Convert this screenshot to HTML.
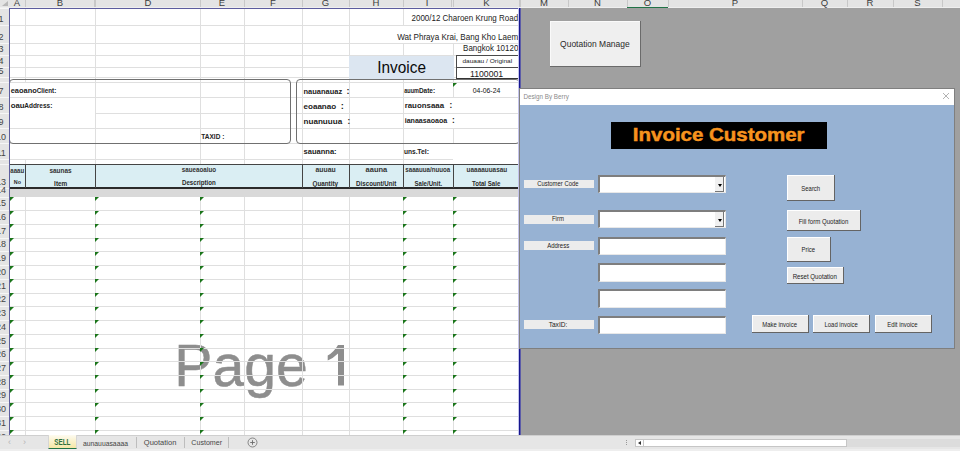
<!DOCTYPE html><html><head><meta charset="utf-8"><style>
html,body{margin:0;padding:0;}
body{width:960px;height:451px;overflow:hidden;position:relative;background:#fff;font-family:"Liberation Sans",sans-serif;}
div{position:absolute;box-sizing:border-box;}
svg{position:absolute;left:0;top:0;}
.t{white-space:nowrap;line-height:1;}
text{font-family:"Liberation Sans",sans-serif;}
</style></head><body>
<div style="left:9px;top:8px;width:511px;height:427px;background:#fff"></div>
<svg width="960" height="451"><text x="174.3" y="385.6" font-size="59" fill="#8e8e8e" stroke="#8e8e8e" stroke-width="0.5" textLength="133.5" lengthAdjust="spacingAndGlyphs">Page</text><path d="M338 345H344V385.4H338V353.5Q333 358.5 327.7 360.5V355.6Q334 352 338 345Z" fill="#8e8e8e"/></svg>
<div style="left:9px;top:25px;width:511px;height:1px;background:#dfdfdf"></div>
<div style="left:9px;top:43px;width:511px;height:1px;background:#dfdfdf"></div>
<div style="left:9px;top:55px;width:511px;height:1px;background:#dfdfdf"></div>
<div style="left:9px;top:67px;width:511px;height:1px;background:#dfdfdf"></div>
<div style="left:9px;top:77px;width:511px;height:1px;background:#dfdfdf"></div>
<div style="left:9px;top:82px;width:511px;height:1px;background:#dfdfdf"></div>
<div style="left:9px;top:97px;width:511px;height:1px;background:#dfdfdf"></div>
<div style="left:9px;top:113px;width:511px;height:1px;background:#dfdfdf"></div>
<div style="left:9px;top:128px;width:511px;height:1px;background:#dfdfdf"></div>
<div style="left:9px;top:143px;width:511px;height:1px;background:#dfdfdf"></div>
<div style="left:9px;top:159px;width:511px;height:1px;background:#dfdfdf"></div>
<div style="left:9px;top:210px;width:511px;height:1px;background:#dfdfdf"></div>
<div style="left:9px;top:224px;width:511px;height:1px;background:#dfdfdf"></div>
<div style="left:9px;top:238px;width:511px;height:1px;background:#dfdfdf"></div>
<div style="left:9px;top:251px;width:511px;height:1px;background:#dfdfdf"></div>
<div style="left:9px;top:265px;width:511px;height:1px;background:#dfdfdf"></div>
<div style="left:9px;top:279px;width:511px;height:1px;background:#dfdfdf"></div>
<div style="left:9px;top:293px;width:511px;height:1px;background:#dfdfdf"></div>
<div style="left:9px;top:306px;width:511px;height:1px;background:#dfdfdf"></div>
<div style="left:9px;top:320px;width:511px;height:1px;background:#dfdfdf"></div>
<div style="left:9px;top:334px;width:511px;height:1px;background:#dfdfdf"></div>
<div style="left:9px;top:348px;width:511px;height:1px;background:#dfdfdf"></div>
<div style="left:9px;top:361px;width:511px;height:1px;background:#dfdfdf"></div>
<div style="left:9px;top:375px;width:511px;height:1px;background:#dfdfdf"></div>
<div style="left:9px;top:389px;width:511px;height:1px;background:#dfdfdf"></div>
<div style="left:9px;top:402px;width:511px;height:1px;background:#dfdfdf"></div>
<div style="left:9px;top:416px;width:511px;height:1px;background:#dfdfdf"></div>
<div style="left:9px;top:430px;width:511px;height:1px;background:#dfdfdf"></div>
<div style="left:25px;top:8px;width:1px;height:427px;background:#dfdfdf"></div>
<div style="left:95px;top:8px;width:1px;height:427px;background:#dfdfdf"></div>
<div style="left:200px;top:8px;width:1px;height:427px;background:#dfdfdf"></div>
<div style="left:244px;top:8px;width:1px;height:427px;background:#dfdfdf"></div>
<div style="left:302px;top:8px;width:1px;height:427px;background:#dfdfdf"></div>
<div style="left:349px;top:8px;width:1px;height:427px;background:#dfdfdf"></div>
<div style="left:403px;top:8px;width:1px;height:427px;background:#dfdfdf"></div>
<div style="left:453px;top:8px;width:1px;height:427px;background:#dfdfdf"></div>
<div style="left:404px;top:9px;width:115px;height:16px;background:#fff"></div>
<div style="left:350px;top:26px;width:169px;height:17px;background:#fff"></div>
<div style="left:10px;top:144px;width:85px;height:15px;background:#fff"></div>
<div style="left:453px;top:144px;width:66px;height:20px;background:#fff"></div>
<div style="left:10px;top:83px;width:280px;height:60px;background:#fff"></div>
<div style="left:297px;top:83px;width:221px;height:60px;background:#fff"></div>
<div style="left:10px;top:97px;width:280px;height:1px;background:#dfdfdf"></div>
<div style="left:10px;top:128px;width:280px;height:1px;background:#dfdfdf"></div>
<div style="left:95px;top:113px;width:195px;height:1px;background:#dfdfdf"></div>
<div style="left:95px;top:83px;width:1px;height:60px;background:#dfdfdf"></div>
<div style="left:200px;top:83px;width:1px;height:60px;background:#dfdfdf"></div>
<div style="left:244px;top:83px;width:1px;height:60px;background:#dfdfdf"></div>
<div style="left:297px;top:97px;width:221px;height:1px;background:#dfdfdf"></div>
<div style="left:297px;top:113px;width:221px;height:1px;background:#dfdfdf"></div>
<div style="left:297px;top:128px;width:221px;height:1px;background:#dfdfdf"></div>
<div style="left:302px;top:83px;width:1px;height:60px;background:#dfdfdf"></div>
<div style="left:349px;top:83px;width:1px;height:60px;background:#dfdfdf"></div>
<div style="left:403px;top:83px;width:1px;height:60px;background:#dfdfdf"></div>
<div style="left:453px;top:83px;width:1px;height:14px;background:#dfdfdf"></div>
<div style="left:453px;top:128px;width:1px;height:15px;background:#dfdfdf"></div>
<div style="left:9px;top:79px;width:282px;height:64.5px;border:1.4px solid #707070;border-radius:4px;"></div>
<div style="left:296px;top:79px;width:224px;height:64.5px;border:1.4px solid #707070;border-radius:4px;"></div>
<div style="left:349px;top:56px;width:104.5px;height:23px;background:#dce6f1"></div>
<div style="left:455.5px;top:55px;width:63.5px;height:24px;background:#fff;border:1px solid #4a4a4a;border-bottom:1.5px solid #333;"></div>
<div style="left:455.5px;top:67px;width:63.5px;height:1px;background:#4a4a4a"></div>
<div style="left:9px;top:164px;width:511px;height:24px;background:#daeef3"></div>
<div style="left:9px;top:164px;width:511px;height:1px;background:#444"></div>
<div style="left:9px;top:187px;width:511px;height:2px;background:#2a2a2a"></div>
<div style="left:25px;top:164px;width:1px;height:24px;background:#444"></div>
<div style="left:95px;top:164px;width:1px;height:24px;background:#444"></div>
<div style="left:302px;top:164px;width:1px;height:24px;background:#444"></div>
<div style="left:349px;top:164px;width:1px;height:24px;background:#444"></div>
<div style="left:403px;top:164px;width:1px;height:24px;background:#444"></div>
<div style="left:453px;top:164px;width:1px;height:24px;background:#444"></div>
<div style="left:10px;top:189px;width:510px;height:8px;background:#d9d9d9"></div>
<svg width="960" height="451"><text x="411.50" y="21.4" font-size="8.5" font-weight="normal" fill="#222" textLength="106.60" lengthAdjust="spacingAndGlyphs">2000/12 Charoen Krung Road</text><text x="397.20" y="39.8" font-size="8.5" font-weight="normal" fill="#222" textLength="121.10" lengthAdjust="spacingAndGlyphs">Wat Phraya Krai, Bang Kho Laem</text><text x="463.10" y="50.9" font-size="8.5" font-weight="normal" fill="#222" textLength="55.20" lengthAdjust="spacingAndGlyphs">Bangkok 10120</text><text x="377.30" y="73.1" font-size="15.8" font-weight="normal" fill="#0a0a0a" textLength="48.70" lengthAdjust="spacingAndGlyphs">Invoice</text><text x="462.45" y="62.9" font-size="5.8" font-weight="normal" fill="#1a1a1a" textLength="49.75" lengthAdjust="spacingAndGlyphs">dauaau / Original</text><text x="469.95" y="76.6" font-size="8.8" font-weight="normal" fill="#1a1a1a" textLength="33.25" lengthAdjust="spacingAndGlyphs">1100001</text><text x="10.70" y="93.25" font-size="7.4" font-weight="bold" fill="#222" textLength="26.10" lengthAdjust="spacingAndGlyphs">eaoano</text><text x="36.70" y="93.25" font-size="7.0" font-weight="bold" fill="#222" textLength="19.60" lengthAdjust="spacingAndGlyphs">Client:</text><text x="10.70" y="107.8" font-size="7.4" font-weight="bold" fill="#222" textLength="13.90" lengthAdjust="spacingAndGlyphs">oau</text><text x="24.30" y="107.8" font-size="7.0" font-weight="bold" fill="#222" textLength="28.00" lengthAdjust="spacingAndGlyphs">Address:</text><text x="201.35" y="139.4" font-size="7.4" font-weight="bold" fill="#222" textLength="22.95" lengthAdjust="spacingAndGlyphs">TAXID :</text><text x="303.50" y="93.5" font-size="7.4" font-weight="bold" fill="#222" textLength="38.70" lengthAdjust="spacingAndGlyphs">nauanauaz</text><text x="346.60" y="93.5" font-size="8.5" font-weight="bold" fill="#222" textLength="3.00" lengthAdjust="spacingAndGlyphs">:</text><text x="303.50" y="108.9" font-size="7.4" font-weight="bold" fill="#222" textLength="32.70" lengthAdjust="spacingAndGlyphs">eoaanao</text><text x="340.70" y="108.9" font-size="8.5" font-weight="bold" fill="#222" textLength="3.10" lengthAdjust="spacingAndGlyphs">:</text><text x="303.50" y="123.9" font-size="7.4" font-weight="bold" fill="#222" textLength="38.70" lengthAdjust="spacingAndGlyphs">nuanuuua</text><text x="347.60" y="123.9" font-size="8.5" font-weight="bold" fill="#222" textLength="2.70" lengthAdjust="spacingAndGlyphs">:</text><text x="303.50" y="153.7" font-size="7.4" font-weight="bold" fill="#222" textLength="33.10" lengthAdjust="spacingAndGlyphs">sauanna:</text><text x="404.20" y="92.75" font-size="7.4" font-weight="bold" fill="#222" textLength="14.80" lengthAdjust="spacingAndGlyphs">auum</text><text x="418.90" y="92.75" font-size="7.0" font-weight="bold" fill="#222" textLength="16.20" lengthAdjust="spacingAndGlyphs">Date:</text><text x="404.70" y="108" font-size="7.4" font-weight="bold" fill="#222" textLength="39.35" lengthAdjust="spacingAndGlyphs">rauonsaaa</text><text x="449.45" y="108" font-size="8.5" font-weight="bold" fill="#222" textLength="2.75" lengthAdjust="spacingAndGlyphs">:</text><text x="404.70" y="123.25" font-size="7.4" font-weight="bold" fill="#222" textLength="42.50" lengthAdjust="spacingAndGlyphs">ianaasaoaoa</text><text x="451.95" y="123.25" font-size="8.5" font-weight="bold" fill="#222" textLength="2.75" lengthAdjust="spacingAndGlyphs">:</text><text x="404.00" y="153.7" font-size="7.4" font-weight="bold" fill="#222" textLength="13.60" lengthAdjust="spacingAndGlyphs">uns.</text><text x="417.30" y="153.7" font-size="7.0" font-weight="bold" fill="#222" textLength="11.80" lengthAdjust="spacingAndGlyphs">Tel:</text><text x="472.80" y="93.25" font-size="6.6" font-weight="normal" fill="#111" textLength="27.50" lengthAdjust="spacingAndGlyphs">04-06-24</text><text x="10.30" y="172.5" font-size="7.4" font-weight="bold" fill="#333" textLength="13.90" lengthAdjust="spacingAndGlyphs">aaau</text><text x="13.80" y="184.3" font-size="5.6" font-weight="bold" fill="#2a2a2a" textLength="7.15" lengthAdjust="spacingAndGlyphs">No</text><text x="49.40" y="172.5" font-size="7.4" font-weight="bold" fill="#333" textLength="22.20" lengthAdjust="spacingAndGlyphs">saunas</text><text x="54.10" y="185.6" font-size="6.8" font-weight="bold" fill="#2a2a2a" textLength="13.20" lengthAdjust="spacingAndGlyphs">Item</text><text x="181.70" y="172.1" font-size="7.4" font-weight="bold" fill="#333" textLength="34.40" lengthAdjust="spacingAndGlyphs">saueaoaiuo</text><text x="182.00" y="185.4" font-size="6.8" font-weight="bold" fill="#2a2a2a" textLength="33.80" lengthAdjust="spacingAndGlyphs">Description</text><text x="315.50" y="172.3" font-size="7.4" font-weight="bold" fill="#333" textLength="20.10" lengthAdjust="spacingAndGlyphs">auuau</text><text x="312.50" y="185.5" font-size="6.8" font-weight="bold" fill="#2a2a2a" textLength="25.60" lengthAdjust="spacingAndGlyphs">Quantity</text><text x="365.60" y="172.3" font-size="7.4" font-weight="bold" fill="#333" textLength="21.70" lengthAdjust="spacingAndGlyphs">aauna</text><text x="356.10" y="185.5" font-size="6.8" font-weight="bold" fill="#2a2a2a" textLength="40.20" lengthAdjust="spacingAndGlyphs">Discount/Unit</text><text x="405.30" y="172.25" font-size="7.4" font-weight="bold" fill="#333" textLength="45.00" lengthAdjust="spacingAndGlyphs">saaauua/nuuoa</text><text x="414.45" y="185.5" font-size="6.8" font-weight="bold" fill="#2a2a2a" textLength="27.75" lengthAdjust="spacingAndGlyphs">Sale/Unit.</text><text x="466.60" y="172.25" font-size="7.4" font-weight="bold" fill="#333" textLength="40.60" lengthAdjust="spacingAndGlyphs">uaaaauuasau</text><text x="471.95" y="185.5" font-size="6.8" font-weight="bold" fill="#2a2a2a" textLength="28.35" lengthAdjust="spacingAndGlyphs">Total Sale</text></svg>
<div style="left:453px;top:82.5px;width:0;height:0;border-top:4.5px solid #1a751a;border-right:4.5px solid transparent;"></div>
<div style="left:10px;top:197px;width:0;height:0;border-top:4.5px solid #1a751a;border-right:4.5px solid transparent;"></div>
<div style="left:95px;top:197px;width:0;height:0;border-top:4.5px solid #1a751a;border-right:4.5px solid transparent;"></div>
<div style="left:200px;top:197px;width:0;height:0;border-top:4.5px solid #1a751a;border-right:4.5px solid transparent;"></div>
<div style="left:403px;top:197px;width:0;height:0;border-top:4.5px solid #1a751a;border-right:4.5px solid transparent;"></div>
<div style="left:453px;top:197px;width:0;height:0;border-top:4.5px solid #1a751a;border-right:4.5px solid transparent;"></div>
<div style="left:10px;top:211px;width:0;height:0;border-top:4.5px solid #1a751a;border-right:4.5px solid transparent;"></div>
<div style="left:95px;top:211px;width:0;height:0;border-top:4.5px solid #1a751a;border-right:4.5px solid transparent;"></div>
<div style="left:200px;top:211px;width:0;height:0;border-top:4.5px solid #1a751a;border-right:4.5px solid transparent;"></div>
<div style="left:403px;top:211px;width:0;height:0;border-top:4.5px solid #1a751a;border-right:4.5px solid transparent;"></div>
<div style="left:453px;top:211px;width:0;height:0;border-top:4.5px solid #1a751a;border-right:4.5px solid transparent;"></div>
<div style="left:10px;top:224px;width:0;height:0;border-top:4.5px solid #1a751a;border-right:4.5px solid transparent;"></div>
<div style="left:95px;top:224px;width:0;height:0;border-top:4.5px solid #1a751a;border-right:4.5px solid transparent;"></div>
<div style="left:200px;top:224px;width:0;height:0;border-top:4.5px solid #1a751a;border-right:4.5px solid transparent;"></div>
<div style="left:403px;top:224px;width:0;height:0;border-top:4.5px solid #1a751a;border-right:4.5px solid transparent;"></div>
<div style="left:453px;top:224px;width:0;height:0;border-top:4.5px solid #1a751a;border-right:4.5px solid transparent;"></div>
<div style="left:10px;top:238px;width:0;height:0;border-top:4.5px solid #1a751a;border-right:4.5px solid transparent;"></div>
<div style="left:95px;top:238px;width:0;height:0;border-top:4.5px solid #1a751a;border-right:4.5px solid transparent;"></div>
<div style="left:200px;top:238px;width:0;height:0;border-top:4.5px solid #1a751a;border-right:4.5px solid transparent;"></div>
<div style="left:403px;top:238px;width:0;height:0;border-top:4.5px solid #1a751a;border-right:4.5px solid transparent;"></div>
<div style="left:453px;top:238px;width:0;height:0;border-top:4.5px solid #1a751a;border-right:4.5px solid transparent;"></div>
<div style="left:10px;top:252px;width:0;height:0;border-top:4.5px solid #1a751a;border-right:4.5px solid transparent;"></div>
<div style="left:95px;top:252px;width:0;height:0;border-top:4.5px solid #1a751a;border-right:4.5px solid transparent;"></div>
<div style="left:200px;top:252px;width:0;height:0;border-top:4.5px solid #1a751a;border-right:4.5px solid transparent;"></div>
<div style="left:403px;top:252px;width:0;height:0;border-top:4.5px solid #1a751a;border-right:4.5px solid transparent;"></div>
<div style="left:453px;top:252px;width:0;height:0;border-top:4.5px solid #1a751a;border-right:4.5px solid transparent;"></div>
<div style="left:10px;top:266px;width:0;height:0;border-top:4.5px solid #1a751a;border-right:4.5px solid transparent;"></div>
<div style="left:95px;top:266px;width:0;height:0;border-top:4.5px solid #1a751a;border-right:4.5px solid transparent;"></div>
<div style="left:200px;top:266px;width:0;height:0;border-top:4.5px solid #1a751a;border-right:4.5px solid transparent;"></div>
<div style="left:403px;top:266px;width:0;height:0;border-top:4.5px solid #1a751a;border-right:4.5px solid transparent;"></div>
<div style="left:453px;top:266px;width:0;height:0;border-top:4.5px solid #1a751a;border-right:4.5px solid transparent;"></div>
<div style="left:10px;top:279px;width:0;height:0;border-top:4.5px solid #1a751a;border-right:4.5px solid transparent;"></div>
<div style="left:95px;top:279px;width:0;height:0;border-top:4.5px solid #1a751a;border-right:4.5px solid transparent;"></div>
<div style="left:200px;top:279px;width:0;height:0;border-top:4.5px solid #1a751a;border-right:4.5px solid transparent;"></div>
<div style="left:403px;top:279px;width:0;height:0;border-top:4.5px solid #1a751a;border-right:4.5px solid transparent;"></div>
<div style="left:453px;top:279px;width:0;height:0;border-top:4.5px solid #1a751a;border-right:4.5px solid transparent;"></div>
<div style="left:10px;top:293px;width:0;height:0;border-top:4.5px solid #1a751a;border-right:4.5px solid transparent;"></div>
<div style="left:95px;top:293px;width:0;height:0;border-top:4.5px solid #1a751a;border-right:4.5px solid transparent;"></div>
<div style="left:200px;top:293px;width:0;height:0;border-top:4.5px solid #1a751a;border-right:4.5px solid transparent;"></div>
<div style="left:403px;top:293px;width:0;height:0;border-top:4.5px solid #1a751a;border-right:4.5px solid transparent;"></div>
<div style="left:453px;top:293px;width:0;height:0;border-top:4.5px solid #1a751a;border-right:4.5px solid transparent;"></div>
<div style="left:10px;top:307px;width:0;height:0;border-top:4.5px solid #1a751a;border-right:4.5px solid transparent;"></div>
<div style="left:95px;top:307px;width:0;height:0;border-top:4.5px solid #1a751a;border-right:4.5px solid transparent;"></div>
<div style="left:200px;top:307px;width:0;height:0;border-top:4.5px solid #1a751a;border-right:4.5px solid transparent;"></div>
<div style="left:403px;top:307px;width:0;height:0;border-top:4.5px solid #1a751a;border-right:4.5px solid transparent;"></div>
<div style="left:453px;top:307px;width:0;height:0;border-top:4.5px solid #1a751a;border-right:4.5px solid transparent;"></div>
<div style="left:10px;top:320px;width:0;height:0;border-top:4.5px solid #1a751a;border-right:4.5px solid transparent;"></div>
<div style="left:95px;top:320px;width:0;height:0;border-top:4.5px solid #1a751a;border-right:4.5px solid transparent;"></div>
<div style="left:200px;top:320px;width:0;height:0;border-top:4.5px solid #1a751a;border-right:4.5px solid transparent;"></div>
<div style="left:403px;top:320px;width:0;height:0;border-top:4.5px solid #1a751a;border-right:4.5px solid transparent;"></div>
<div style="left:453px;top:320px;width:0;height:0;border-top:4.5px solid #1a751a;border-right:4.5px solid transparent;"></div>
<div style="left:10px;top:334px;width:0;height:0;border-top:4.5px solid #1a751a;border-right:4.5px solid transparent;"></div>
<div style="left:95px;top:334px;width:0;height:0;border-top:4.5px solid #1a751a;border-right:4.5px solid transparent;"></div>
<div style="left:200px;top:334px;width:0;height:0;border-top:4.5px solid #1a751a;border-right:4.5px solid transparent;"></div>
<div style="left:403px;top:334px;width:0;height:0;border-top:4.5px solid #1a751a;border-right:4.5px solid transparent;"></div>
<div style="left:453px;top:334px;width:0;height:0;border-top:4.5px solid #1a751a;border-right:4.5px solid transparent;"></div>
<div style="left:10px;top:348px;width:0;height:0;border-top:4.5px solid #1a751a;border-right:4.5px solid transparent;"></div>
<div style="left:95px;top:348px;width:0;height:0;border-top:4.5px solid #1a751a;border-right:4.5px solid transparent;"></div>
<div style="left:200px;top:348px;width:0;height:0;border-top:4.5px solid #1a751a;border-right:4.5px solid transparent;"></div>
<div style="left:403px;top:348px;width:0;height:0;border-top:4.5px solid #1a751a;border-right:4.5px solid transparent;"></div>
<div style="left:453px;top:348px;width:0;height:0;border-top:4.5px solid #1a751a;border-right:4.5px solid transparent;"></div>
<div style="left:10px;top:362px;width:0;height:0;border-top:4.5px solid #1a751a;border-right:4.5px solid transparent;"></div>
<div style="left:95px;top:362px;width:0;height:0;border-top:4.5px solid #1a751a;border-right:4.5px solid transparent;"></div>
<div style="left:200px;top:362px;width:0;height:0;border-top:4.5px solid #1a751a;border-right:4.5px solid transparent;"></div>
<div style="left:403px;top:362px;width:0;height:0;border-top:4.5px solid #1a751a;border-right:4.5px solid transparent;"></div>
<div style="left:453px;top:362px;width:0;height:0;border-top:4.5px solid #1a751a;border-right:4.5px solid transparent;"></div>
<div style="left:10px;top:375px;width:0;height:0;border-top:4.5px solid #1a751a;border-right:4.5px solid transparent;"></div>
<div style="left:95px;top:375px;width:0;height:0;border-top:4.5px solid #1a751a;border-right:4.5px solid transparent;"></div>
<div style="left:200px;top:375px;width:0;height:0;border-top:4.5px solid #1a751a;border-right:4.5px solid transparent;"></div>
<div style="left:403px;top:375px;width:0;height:0;border-top:4.5px solid #1a751a;border-right:4.5px solid transparent;"></div>
<div style="left:453px;top:375px;width:0;height:0;border-top:4.5px solid #1a751a;border-right:4.5px solid transparent;"></div>
<div style="left:10px;top:389px;width:0;height:0;border-top:4.5px solid #1a751a;border-right:4.5px solid transparent;"></div>
<div style="left:95px;top:389px;width:0;height:0;border-top:4.5px solid #1a751a;border-right:4.5px solid transparent;"></div>
<div style="left:200px;top:389px;width:0;height:0;border-top:4.5px solid #1a751a;border-right:4.5px solid transparent;"></div>
<div style="left:403px;top:389px;width:0;height:0;border-top:4.5px solid #1a751a;border-right:4.5px solid transparent;"></div>
<div style="left:453px;top:389px;width:0;height:0;border-top:4.5px solid #1a751a;border-right:4.5px solid transparent;"></div>
<div style="left:10px;top:403px;width:0;height:0;border-top:4.5px solid #1a751a;border-right:4.5px solid transparent;"></div>
<div style="left:95px;top:403px;width:0;height:0;border-top:4.5px solid #1a751a;border-right:4.5px solid transparent;"></div>
<div style="left:200px;top:403px;width:0;height:0;border-top:4.5px solid #1a751a;border-right:4.5px solid transparent;"></div>
<div style="left:403px;top:403px;width:0;height:0;border-top:4.5px solid #1a751a;border-right:4.5px solid transparent;"></div>
<div style="left:453px;top:403px;width:0;height:0;border-top:4.5px solid #1a751a;border-right:4.5px solid transparent;"></div>
<div style="left:10px;top:417px;width:0;height:0;border-top:4.5px solid #1a751a;border-right:4.5px solid transparent;"></div>
<div style="left:95px;top:417px;width:0;height:0;border-top:4.5px solid #1a751a;border-right:4.5px solid transparent;"></div>
<div style="left:200px;top:417px;width:0;height:0;border-top:4.5px solid #1a751a;border-right:4.5px solid transparent;"></div>
<div style="left:403px;top:417px;width:0;height:0;border-top:4.5px solid #1a751a;border-right:4.5px solid transparent;"></div>
<div style="left:453px;top:417px;width:0;height:0;border-top:4.5px solid #1a751a;border-right:4.5px solid transparent;"></div>
<div style="left:10px;top:430px;width:0;height:0;border-top:4.5px solid #1a751a;border-right:4.5px solid transparent;"></div>
<div style="left:95px;top:430px;width:0;height:0;border-top:4.5px solid #1a751a;border-right:4.5px solid transparent;"></div>
<div style="left:200px;top:430px;width:0;height:0;border-top:4.5px solid #1a751a;border-right:4.5px solid transparent;"></div>
<div style="left:403px;top:430px;width:0;height:0;border-top:4.5px solid #1a751a;border-right:4.5px solid transparent;"></div>
<div style="left:453px;top:430px;width:0;height:0;border-top:4.5px solid #1a751a;border-right:4.5px solid transparent;"></div>
<div style="left:520px;top:8px;width:440px;height:427px;background:#a0a0a0"></div>
<div style="left:9px;top:8px;width:511px;height:1px;background:#5d5d9e"></div>
<div style="left:9px;top:8px;width:1px;height:427px;background:#5d5d9e"></div>
<div style="left:518px;top:8px;width:1px;height:427px;background:#c4c4ec"></div>
<div style="left:519px;top:8px;width:1px;height:427px;background:#16168e"></div>
<div style="left:520px;top:8px;width:1px;height:427px;background:#5c5ca8"></div>
<div style="left:0px;top:0px;width:960px;height:8px;background:#e4e4e4"></div>
<div style="left:0px;top:7px;width:960px;height:1px;background:#efefef"></div>
<div style="left:2px;top:1px;width:0;height:0;border-bottom:5px solid #b8b8b8;border-left:6px solid transparent;"></div>
<div style="left:25px;top:0px;width:1px;height:7px;background:#c8c8c8"></div>
<div class="t" style="left:-183.0px;top:-2.2px;width:400px;text-align:center;font-size:9.5px;color:#3c3c3c;">A</div>
<div style="left:95px;top:0px;width:1px;height:7px;background:#c8c8c8"></div>
<div class="t" style="left:-140.0px;top:-2.2px;width:400px;text-align:center;font-size:9.5px;color:#3c3c3c;">B</div>
<div style="left:200px;top:0px;width:1px;height:7px;background:#c8c8c8"></div>
<div class="t" style="left:-52.0px;top:-2.2px;width:400px;text-align:center;font-size:9.5px;color:#3c3c3c;">D</div>
<div style="left:244px;top:0px;width:1px;height:7px;background:#c8c8c8"></div>
<div class="t" style="left:22.0px;top:-2.2px;width:400px;text-align:center;font-size:9.5px;color:#3c3c3c;">E</div>
<div style="left:302px;top:0px;width:1px;height:7px;background:#c8c8c8"></div>
<div class="t" style="left:73.0px;top:-2.2px;width:400px;text-align:center;font-size:9.5px;color:#3c3c3c;">F</div>
<div style="left:349px;top:0px;width:1px;height:7px;background:#c8c8c8"></div>
<div class="t" style="left:125.5px;top:-2.2px;width:400px;text-align:center;font-size:9.5px;color:#3c3c3c;">G</div>
<div style="left:403px;top:0px;width:1px;height:7px;background:#c8c8c8"></div>
<div class="t" style="left:176.0px;top:-2.2px;width:400px;text-align:center;font-size:9.5px;color:#3c3c3c;">H</div>
<div style="left:451px;top:0px;width:1px;height:7px;background:#c8c8c8"></div>
<div class="t" style="left:227.0px;top:-2.2px;width:400px;text-align:center;font-size:9.5px;color:#3c3c3c;">I</div>
<div style="left:519px;top:0px;width:1px;height:7px;background:#c8c8c8"></div>
<div class="t" style="left:286.5px;top:-2.2px;width:400px;text-align:center;font-size:9.5px;color:#3c3c3c;">K</div>
<div style="left:568px;top:0px;width:1px;height:7px;background:#c8c8c8"></div>
<div class="t" style="left:344.0px;top:-2.2px;width:400px;text-align:center;font-size:9.5px;color:#3c3c3c;">M</div>
<div style="left:627px;top:0px;width:1px;height:7px;background:#c8c8c8"></div>
<div class="t" style="left:397.5px;top:-2.2px;width:400px;text-align:center;font-size:9.5px;color:#3c3c3c;">N</div>
<div style="left:668px;top:0px;width:1px;height:7px;background:#c8c8c8"></div>
<div class="t" style="left:447.5px;top:-2.2px;width:400px;text-align:center;font-size:9.5px;color:#3c3c3c;">O</div>
<div style="left:802px;top:0px;width:1px;height:7px;background:#c8c8c8"></div>
<div class="t" style="left:535.0px;top:-2.2px;width:400px;text-align:center;font-size:9.5px;color:#3c3c3c;">P</div>
<div style="left:847px;top:0px;width:1px;height:7px;background:#c8c8c8"></div>
<div class="t" style="left:624.5px;top:-2.2px;width:400px;text-align:center;font-size:9.5px;color:#3c3c3c;">Q</div>
<div style="left:893px;top:0px;width:1px;height:7px;background:#c8c8c8"></div>
<div class="t" style="left:670.0px;top:-2.2px;width:400px;text-align:center;font-size:9.5px;color:#3c3c3c;">R</div>
<div style="left:942px;top:0px;width:1px;height:7px;background:#c8c8c8"></div>
<div class="t" style="left:717.5px;top:-2.2px;width:400px;text-align:center;font-size:9.5px;color:#3c3c3c;">S</div>
<div style="left:990px;top:0px;width:1px;height:7px;background:#c8c8c8"></div>
<div class="t" style="left:766.0px;top:-2.2px;width:400px;text-align:center;font-size:9.5px;color:#3c3c3c;">T</div>
<div style="left:94px;top:0px;width:1px;height:7px;background:#c8c8c8"></div>
<div style="left:453px;top:0px;width:1px;height:7px;background:#c8c8c8"></div>
<div style="left:520px;top:0px;width:1px;height:7px;background:#c8c8c8"></div>
<div style="left:627px;top:6.5px;width:41px;height:1.5px;background:#217346"></div>
<div style="left:0px;top:8px;width:9px;height:427px;background:#e4e4e4"></div>
<div style="left:0px;top:25px;width:9px;height:1px;background:#f6f6f6"></div>
<div class="t" style="left:-39.4px;top:14.9px;width:81px;text-align:center;font-size:9px;color:#444;">1</div>
<div style="left:0px;top:43px;width:9px;height:1px;background:#f6f6f6"></div>
<div class="t" style="left:-39.4px;top:32.9px;width:81px;text-align:center;font-size:9px;color:#444;">2</div>
<div style="left:0px;top:55px;width:9px;height:1px;background:#f6f6f6"></div>
<div class="t" style="left:-39.4px;top:44.9px;width:81px;text-align:center;font-size:9px;color:#444;">3</div>
<div style="left:0px;top:67px;width:9px;height:1px;background:#f6f6f6"></div>
<div class="t" style="left:-39.4px;top:56.9px;width:81px;text-align:center;font-size:9px;color:#444;">4</div>
<div style="left:0px;top:77px;width:9px;height:1px;background:#f6f6f6"></div>
<div class="t" style="left:-39.4px;top:66.9px;width:81px;text-align:center;font-size:9px;color:#444;">5</div>
<div style="left:0px;top:82px;width:9px;height:1px;background:#f6f6f6"></div>
<div style="left:0px;top:97px;width:9px;height:1px;background:#f6f6f6"></div>
<div class="t" style="left:-39.4px;top:86.9px;width:81px;text-align:center;font-size:9px;color:#444;">7</div>
<div style="left:0px;top:113px;width:9px;height:1px;background:#f6f6f6"></div>
<div class="t" style="left:-39.4px;top:102.9px;width:81px;text-align:center;font-size:9px;color:#444;">8</div>
<div style="left:0px;top:128px;width:9px;height:1px;background:#f6f6f6"></div>
<div class="t" style="left:-39.4px;top:117.9px;width:81px;text-align:center;font-size:9px;color:#444;">9</div>
<div style="left:0px;top:143px;width:9px;height:1px;background:#f6f6f6"></div>
<div class="t" style="left:-39.4px;top:132.9px;width:81px;text-align:center;font-size:9px;color:#444;">10</div>
<div style="left:0px;top:159px;width:9px;height:1px;background:#f6f6f6"></div>
<div class="t" style="left:-39.4px;top:148.9px;width:81px;text-align:center;font-size:9px;color:#444;">11</div>
<div style="left:0px;top:164px;width:9px;height:1px;background:#f6f6f6"></div>
<div style="left:0px;top:188px;width:9px;height:1px;background:#f6f6f6"></div>
<div class="t" style="left:-39.4px;top:177.9px;width:81px;text-align:center;font-size:9px;color:#444;">13</div>
<div style="left:0px;top:197px;width:9px;height:1px;background:#f6f6f6"></div>
<div class="t" style="left:-39.4px;top:185.9px;width:81px;text-align:center;font-size:9px;color:#444;">14</div>
<div style="left:0px;top:210px;width:9px;height:1px;background:#f6f6f6"></div>
<div class="t" style="left:-39.4px;top:198.9px;width:81px;text-align:center;font-size:9px;color:#444;">15</div>
<div style="left:0px;top:224px;width:9px;height:1px;background:#f6f6f6"></div>
<div class="t" style="left:-39.4px;top:212.9px;width:81px;text-align:center;font-size:9px;color:#444;">16</div>
<div style="left:0px;top:238px;width:9px;height:1px;background:#f6f6f6"></div>
<div class="t" style="left:-39.4px;top:226.9px;width:81px;text-align:center;font-size:9px;color:#444;">17</div>
<div style="left:0px;top:251px;width:9px;height:1px;background:#f6f6f6"></div>
<div class="t" style="left:-39.4px;top:239.9px;width:81px;text-align:center;font-size:9px;color:#444;">18</div>
<div style="left:0px;top:265px;width:9px;height:1px;background:#f6f6f6"></div>
<div class="t" style="left:-39.4px;top:253.9px;width:81px;text-align:center;font-size:9px;color:#444;">19</div>
<div style="left:0px;top:279px;width:9px;height:1px;background:#f6f6f6"></div>
<div class="t" style="left:-39.4px;top:267.9px;width:81px;text-align:center;font-size:9px;color:#444;">20</div>
<div style="left:0px;top:293px;width:9px;height:1px;background:#f6f6f6"></div>
<div class="t" style="left:-39.4px;top:281.9px;width:81px;text-align:center;font-size:9px;color:#444;">21</div>
<div style="left:0px;top:306px;width:9px;height:1px;background:#f6f6f6"></div>
<div class="t" style="left:-39.4px;top:294.9px;width:81px;text-align:center;font-size:9px;color:#444;">22</div>
<div style="left:0px;top:320px;width:9px;height:1px;background:#f6f6f6"></div>
<div class="t" style="left:-39.4px;top:308.9px;width:81px;text-align:center;font-size:9px;color:#444;">23</div>
<div style="left:0px;top:334px;width:9px;height:1px;background:#f6f6f6"></div>
<div class="t" style="left:-39.4px;top:322.9px;width:81px;text-align:center;font-size:9px;color:#444;">24</div>
<div style="left:0px;top:348px;width:9px;height:1px;background:#f6f6f6"></div>
<div class="t" style="left:-39.4px;top:336.9px;width:81px;text-align:center;font-size:9px;color:#444;">25</div>
<div style="left:0px;top:361px;width:9px;height:1px;background:#f6f6f6"></div>
<div class="t" style="left:-39.4px;top:349.9px;width:81px;text-align:center;font-size:9px;color:#444;">26</div>
<div style="left:0px;top:375px;width:9px;height:1px;background:#f6f6f6"></div>
<div class="t" style="left:-39.4px;top:363.9px;width:81px;text-align:center;font-size:9px;color:#444;">27</div>
<div style="left:0px;top:389px;width:9px;height:1px;background:#f6f6f6"></div>
<div class="t" style="left:-39.4px;top:377.9px;width:81px;text-align:center;font-size:9px;color:#444;">28</div>
<div style="left:0px;top:402px;width:9px;height:1px;background:#f6f6f6"></div>
<div class="t" style="left:-39.4px;top:390.9px;width:81px;text-align:center;font-size:9px;color:#444;">29</div>
<div style="left:0px;top:416px;width:9px;height:1px;background:#f6f6f6"></div>
<div class="t" style="left:-39.4px;top:404.9px;width:81px;text-align:center;font-size:9px;color:#444;">30</div>
<div style="left:0px;top:430px;width:9px;height:1px;background:#f6f6f6"></div>
<div class="t" style="left:-39.4px;top:418.9px;width:81px;text-align:center;font-size:9px;color:#444;">31</div>
<div style="left:0px;top:444px;width:9px;height:1px;background:#f6f6f6"></div>
<div class="t" style="left:-39.4px;top:432.9px;width:81px;text-align:center;font-size:9px;color:#444;">32</div>
<div style="left:0px;top:8px;width:9px;height:1px;background:#f6f6f6"></div>
<div style="left:550px;top:21px;width:91px;height:46px;background:#efefef;border-right:1px solid #6a6a6a;border-bottom:1px solid #6a6a6a;box-shadow:inset 1px 1px 0 #fafafa;"></div>
<svg width="960" height="451"><text x="560.1" y="46.9" font-size="9" fill="#2a2a2a" textLength="69.6" lengthAdjust="spacingAndGlyphs">Quotation Manage</text></svg>
<div style="left:519px;top:88px;width:436px;height:261px;background:#97b2d3;border:1px solid #7f7f7f;"></div>
<div style="left:520px;top:89px;width:434px;height:16px;background:#fff"></div>
<svg width="960" height="451"><text x="523.4" y="99.4" font-size="7.6" fill="#8a8a8a" textLength="45.5" lengthAdjust="spacingAndGlyphs">Design By Berry</text></svg>
<svg style="left:942px;top:92px" width="8" height="8"><path d="M1 1L7 7M7 1L1 7" stroke="#999" stroke-width="0.75"/></svg>
<div style="left:611px;top:122px;width:216px;height:27px;background:#000;"></div>
<svg width="960" height="451"><text x="632.8" y="141.3" font-size="18.5" font-weight="bold" fill="#f7931e" stroke="#f7931e" stroke-width="0.45" textLength="171.8" lengthAdjust="spacingAndGlyphs">Invoice Customer</text></svg>
<div style="left:524px;top:179.5px;width:70px;height:8.5px;background:#ececec;"></div>
<div style="left:524px;top:215px;width:70px;height:8.5px;background:#ececec;"></div>
<div style="left:524px;top:241px;width:70px;height:9px;background:#ececec;"></div>
<div style="left:524px;top:320px;width:70px;height:9px;background:#ececec;"></div>
<div style="left:598px;top:175px;width:128px;height:18px;background:#fff;border-top:2px solid #7e7e7e;border-left:2px solid #7e7e7e;border-bottom:1px solid #e8e8e8;border-right:1px solid #e8e8e8;"></div>
<div style="left:715px;top:177px;width:9px;height:15px;background:#f0f0f0;border-right:1px solid #777;border-bottom:1px solid #777;"></div>
<div style="left:717.5px;top:183.5px;width:0;height:0;border-top:3px solid #000;border-left:2px solid transparent;border-right:2px solid transparent;"></div>
<div style="left:598px;top:210px;width:128px;height:18px;background:#fff;border-top:2px solid #7e7e7e;border-left:2px solid #7e7e7e;border-bottom:1px solid #e8e8e8;border-right:1px solid #e8e8e8;"></div>
<div style="left:715px;top:212px;width:9px;height:15px;background:#f0f0f0;border-right:1px solid #777;border-bottom:1px solid #777;"></div>
<div style="left:717.5px;top:218.5px;width:0;height:0;border-top:3px solid #000;border-left:2px solid transparent;border-right:2px solid transparent;"></div>
<div style="left:598px;top:236.5px;width:128px;height:18.5px;background:#fff;border-top:2px solid #7e7e7e;border-left:2px solid #7e7e7e;border-bottom:1px solid #e8e8e8;border-right:1px solid #e8e8e8;"></div>
<div style="left:598px;top:263px;width:128px;height:18.5px;background:#fff;border-top:2px solid #7e7e7e;border-left:2px solid #7e7e7e;border-bottom:1px solid #e8e8e8;border-right:1px solid #e8e8e8;"></div>
<div style="left:598px;top:289px;width:128px;height:18.5px;background:#fff;border-top:2px solid #7e7e7e;border-left:2px solid #7e7e7e;border-bottom:1px solid #e8e8e8;border-right:1px solid #e8e8e8;"></div>
<div style="left:598px;top:315.5px;width:128px;height:18.5px;background:#fff;border-top:2px solid #7e7e7e;border-left:2px solid #7e7e7e;border-bottom:1px solid #e8e8e8;border-right:1px solid #e8e8e8;"></div>
<div style="left:787px;top:175px;width:48px;height:26px;background:#ececec;border-right:1px solid #646464;border-bottom:1px solid #646464;box-shadow:inset 1px 1px 0 #fff;"></div>
<div style="left:787px;top:210px;width:74px;height:21px;background:#ececec;border-right:1px solid #646464;border-bottom:1px solid #646464;box-shadow:inset 1px 1px 0 #fff;"></div>
<div style="left:787px;top:236.5px;width:43.5px;height:25.5px;background:#ececec;border-right:1px solid #646464;border-bottom:1px solid #646464;box-shadow:inset 1px 1px 0 #fff;"></div>
<div style="left:787px;top:267px;width:56.5px;height:17px;background:#ececec;border-right:1px solid #646464;border-bottom:1px solid #646464;box-shadow:inset 1px 1px 0 #fff;"></div>
<div style="left:752px;top:315px;width:56.5px;height:17.5px;background:#ececec;border-right:1px solid #646464;border-bottom:1px solid #646464;box-shadow:inset 1px 1px 0 #fff;"></div>
<div style="left:813px;top:315px;width:57px;height:17.5px;background:#ececec;border-right:1px solid #646464;border-bottom:1px solid #646464;box-shadow:inset 1px 1px 0 #fff;"></div>
<div style="left:875px;top:315px;width:56.5px;height:17.5px;background:#ececec;border-right:1px solid #646464;border-bottom:1px solid #646464;box-shadow:inset 1px 1px 0 #fff;"></div>
<svg width="960" height="451"><text x="537.25" y="186.3" font-size="7" fill="#222" textLength="41.20" lengthAdjust="spacingAndGlyphs">Customer Code</text><text x="551.95" y="221.3" font-size="7" fill="#222" textLength="11.90" lengthAdjust="spacingAndGlyphs">Firm</text><text x="547.15" y="248.3" font-size="7" fill="#222" textLength="22.10" lengthAdjust="spacingAndGlyphs">Address</text><text x="548.65" y="326.8" font-size="7" fill="#222" textLength="18.70" lengthAdjust="spacingAndGlyphs">TaxID:</text><text x="801.35" y="190.6" font-size="7" fill="#222" textLength="18.80" lengthAdjust="spacingAndGlyphs">Search</text><text x="798.65" y="224.3" font-size="7" fill="#222" textLength="49.70" lengthAdjust="spacingAndGlyphs">Fill form Quotation</text><text x="801.55" y="251.9" font-size="7" fill="#222" textLength="13.50" lengthAdjust="spacingAndGlyphs">Price</text><text x="792.65" y="278.5" font-size="7" fill="#222" textLength="44.30" lengthAdjust="spacingAndGlyphs">Reset Quotation</text><text x="762.25" y="326.5" font-size="7" fill="#222" textLength="34.70" lengthAdjust="spacingAndGlyphs">Make invoice</text><text x="824.55" y="326.5" font-size="7" fill="#222" textLength="33.20" lengthAdjust="spacingAndGlyphs">Load invoice</text><text x="887.25" y="326.5" font-size="7" fill="#222" textLength="30.40" lengthAdjust="spacingAndGlyphs">Edit invoice</text></svg>
<div style="left:0px;top:435px;width:960px;height:16px;background:#e6e6e6;border-top:1px solid #cfcfcf;"></div>
<div style="left:0px;top:449px;width:960px;height:2px;background:#eeeeee"></div>
<div class="t" style="left:8px;top:438px;font-size:9px;color:#b5b5b5;">&#8249;</div>
<div class="t" style="left:23px;top:438px;font-size:9px;color:#b5b5b5;">&#8250;</div>
<div style="left:48px;top:435px;width:29px;height:13.5px;background:linear-gradient(#fdfbf0,#f6e7a6);border-bottom:1.5px solid #217346;border-left:1px solid #d6d6d6;border-right:1px solid #d6d6d6;"></div>
<svg width="960" height="451"><text x="54.3" y="445.1" font-size="8.2" font-weight="bold" fill="#2f6f3a" textLength="16.1" lengthAdjust="spacingAndGlyphs">SELL</text></svg>
<svg width="960" height="451"><text x="83" y="446" font-size="8" fill="#444" textLength="45" lengthAdjust="spacingAndGlyphs">aunauuasaaaa</text></svg>
<div style="left:136px;top:437px;width:1px;height:11px;background:#bdbdbd"></div>
<svg width="960" height="451"><text x="143.8" y="444.9" font-size="7.6" fill="#474747" textLength="32.6" lengthAdjust="spacingAndGlyphs">Quotation</text></svg>
<div style="left:184px;top:437px;width:1px;height:11px;background:#bdbdbd"></div>
<svg width="960" height="451"><text x="191.3" y="444.9" font-size="7.6" fill="#474747" textLength="30.8" lengthAdjust="spacingAndGlyphs">Customer</text></svg>
<div style="left:228px;top:437px;width:1px;height:11px;background:#bdbdbd"></div>
<svg style="left:247px;top:437px" width="11" height="11"><circle cx="5.5" cy="5.5" r="4.5" fill="none" stroke="#7a7a7a" stroke-width="0.9"/><path d="M5.5 3.2V7.8M3.2 5.5H7.8" stroke="#6a6a6a" stroke-width="0.9"/></svg>
<div style="left:626px;top:440px;width:1px;height:1px;background:#999"></div>
<div style="left:626px;top:442px;width:1px;height:1px;background:#999"></div>
<div style="left:626px;top:444px;width:1px;height:1px;background:#999"></div>
<div style="left:635px;top:439px;width:9px;height:8px;background:#fff;border:1px solid #c6c6c6;"></div>
<div style="left:638px;top:441px;width:0;height:0;border-right:3px solid #333;border-top:2px solid transparent;border-bottom:2px solid transparent;"></div>
<div style="left:643px;top:439px;width:204px;height:8px;background:#fff;border:1px solid #c6c6c6;"></div>
<div style="left:847px;top:439px;width:113px;height:8px;background:#dcdcdc"></div>
</body></html>
